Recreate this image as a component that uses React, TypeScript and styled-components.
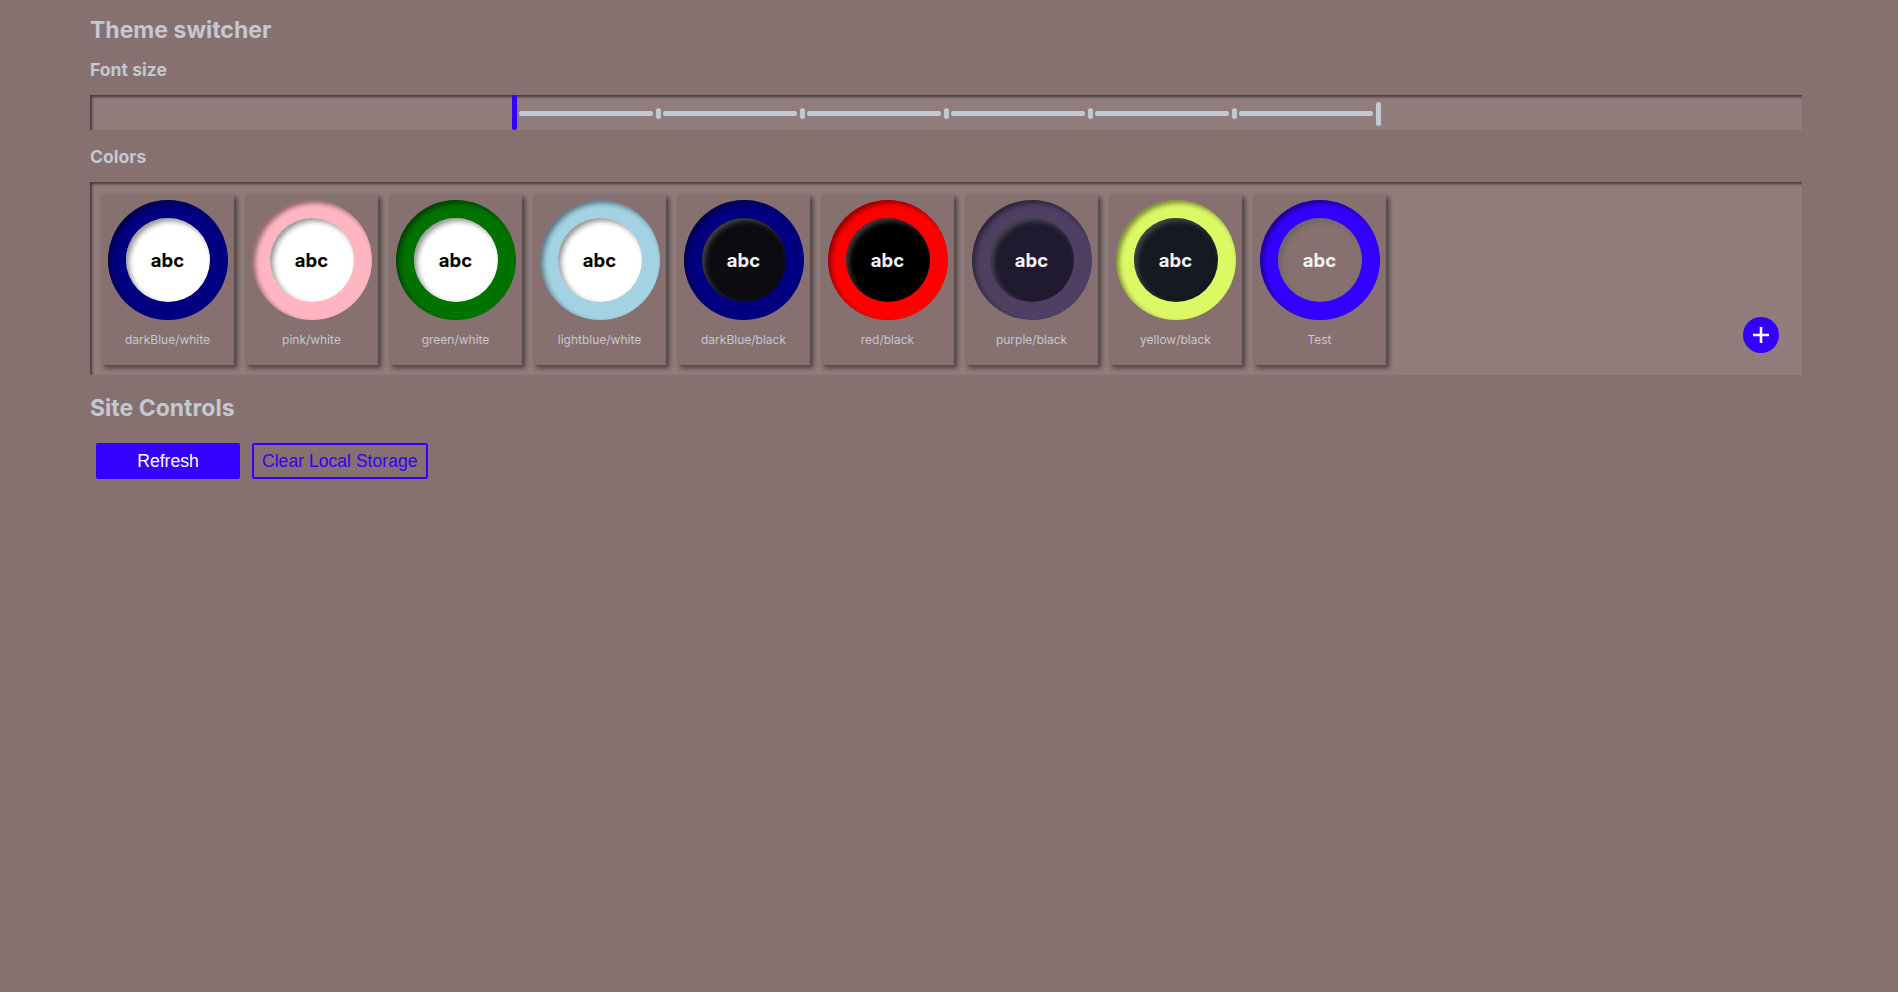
import React from "react";
import styled, { createGlobalStyle } from "styled-components";

const GlobalStyle = createGlobalStyle`
  html, body {
    margin: 0;
    padding: 0;
    background: #877070;
    font-family: Inter, "Noto Sans", sans-serif;
  }
`;

const Page = styled.main`
  box-sizing: border-box;
  width: 1802px;
  padding: 17px 0 40px 90px;
  display: flex;
  flex-direction: column;
`;

const Title = styled.h1<{ $mt?: number }>`
  margin: ${(p) => p.$mt ?? 0}px 0 0;
  font-size: 23px;
  line-height: 27px;
  font-weight: 700;
  color: #c3c8d1;
`;

const SubTitle = styled.h2<{ $mt: number }>`
  margin: ${(p) => p.$mt}px 0 0;
  font-size: 17.6px;
  line-height: 21px;
  font-weight: 700;
  color: #c3c8d1;
`;

const Well = styled.section<{ $mt: number }>`
  margin-top: ${(p) => p.$mt}px;
  background: #917d7c;
  box-shadow: inset 2px 2px 3px rgba(0, 0, 0, 0.55);
`;

const SliderWell = styled(Well)`
  height: 35px;
  display: flex;
  justify-content: center;
  align-items: center;
`;

const Slider = styled.div`
  width: 869px;
  height: 35px;
  display: flex;
  align-items: center;
`;

const Thumb = styled.div`
  width: 5px;
  height: 35px;
  border-radius: 2px;
  background: #3300ff;
`;

const Segment = styled.div`
  width: 134px;
  height: 5px;
  margin: 2px 2.5px 0;
  border-radius: 2.5px;
  background: #c3c9d2;
`;

const Tick = styled.div<{ $end?: boolean }>`
  width: 5px;
  height: ${(p) => (p.$end ? 24 : 11)}px;
  margin-top: 2px;
  border-radius: 2.5px;
  background: #c3c9d2;
`;

const ColorWell = styled(Well)`
  box-sizing: border-box;
  height: 193px;
  padding: 12px 10px 10px 11px;
  display: flex;
  gap: 11px;
`;

const Card = styled.button`
  box-sizing: border-box;
  width: 133px;
  height: 171px;
  padding: 6px 0 0;
  border: none;
  background: #877070;
  box-shadow: 3px 3px 5px rgba(0, 0, 0, 0.5);
  display: flex;
  flex-direction: column;
  align-items: center;
  cursor: pointer;
  font-family: Inter, "Noto Sans", sans-serif;
`;

const Ring = styled.div<{ $ring: string }>`
  width: 120px;
  height: 120px;
  border-radius: 50%;
  background: ${(p) => p.$ring};
  box-shadow: inset 3px 3px 5px rgba(0, 0, 0, 0.45);
  display: flex;
  align-items: center;
  justify-content: center;
`;

const Core = styled.div<{ $bg: string; $fg: string }>`
  width: 84px;
  height: 84px;
  border-radius: 50%;
  background: ${(p) => p.$bg};
  color: ${(p) => p.$fg};
  box-shadow: inset 3px 3px 5px rgba(95, 95, 95, 0.65);
  display: flex;
  align-items: center;
  justify-content: center;
  font-size: 18.5px;
  font-weight: 700;
`;

const CardLabel = styled.span`
  margin-top: 12px;
  font-size: 12px;
  line-height: 15px;
  color: #c4c8d0;
`;

const AddButton = styled.button`
  margin: auto 13px 12px auto;
  width: 36px;
  height: 36px;
  border-radius: 50%;
  border: none;
  padding: 0;
  background: #3300ff;
  display: flex;
  align-items: center;
  justify-content: center;
  cursor: pointer;
`;

const ButtonRow = styled.div`
  margin-top: 15px;
  display: flex;
`;

const Btn = styled.button<{ $outline?: boolean }>`
  box-sizing: border-box;
  margin: 6px;
  height: 36px;
  min-width: 144px;
  padding: 0 8px;
  border-radius: 2px;
  border: 2px solid #3300ff;
  background: ${(p) => (p.$outline ? "transparent" : "#3300ff")};
  color: ${(p) => (p.$outline ? "#3300ff" : "#ffffff")};
  font-family: "Liberation Sans", Arial, sans-serif;
  font-size: 17.6px;
  cursor: pointer;
`;

const themes = [
  { name: "darkBlue/white", ring: "#000080", bg: "#ffffff", fg: "#000000" },
  { name: "pink/white", ring: "#ffb6c1", bg: "#ffffff", fg: "#000000" },
  { name: "green/white", ring: "#007200", bg: "#ffffff", fg: "#000000" },
  { name: "lightblue/white", ring: "#a3d2e2", bg: "#ffffff", fg: "#000000" },
  { name: "darkBlue/black", ring: "#000080", bg: "#0b0b10", fg: "#f4f4f4" },
  { name: "red/black", ring: "#ff0000", bg: "#000000", fg: "#f4f4f4" },
  { name: "purple/black", ring: "#4e3f63", bg: "#201a30", fg: "#f4f4f4" },
  { name: "yellow/black", ring: "#ddf865", bg: "#151a22", fg: "#f4f4f4" },
  { name: "Test", ring: "#3300ff", bg: "#877070", fg: "#f4f4f4" },
];

export default function App() {
  const steps = [0, 1, 2, 3, 4, 5];
  return (
    <>
      <GlobalStyle />
      <Page>
        <Title>Theme switcher</Title>
        <SubTitle $mt={15}>Font size</SubTitle>
        <SliderWell $mt={15}>
          <Slider>
            <Thumb />
            {steps.map((i) => (
              <React.Fragment key={i}>
                <Segment />
                <Tick $end={i === steps.length - 1} />
              </React.Fragment>
            ))}
          </Slider>
        </SliderWell>
        <SubTitle $mt={16}>Colors</SubTitle>
        <ColorWell $mt={15}>
          {themes.map((t) => (
            <Card key={t.name}>
              <Ring $ring={t.ring}>
                <Core $bg={t.bg} $fg={t.fg}>abc</Core>
              </Ring>
              <CardLabel>{t.name}</CardLabel>
            </Card>
          ))}
          <AddButton aria-label="Add theme">
            <svg width="20" height="20" viewBox="0 0 20 20">
              <path d="M10 2v16M2 10h16" stroke="#fff" strokeWidth="2.6" strokeLinecap="butt" />
            </svg>
          </AddButton>
        </ColorWell>
        <Title $mt={20}>Site Controls</Title>
        <ButtonRow>
          <Btn>Refresh</Btn>
          <Btn $outline>Clear Local Storage</Btn>
        </ButtonRow>
      </Page>
    </>
  );
}
